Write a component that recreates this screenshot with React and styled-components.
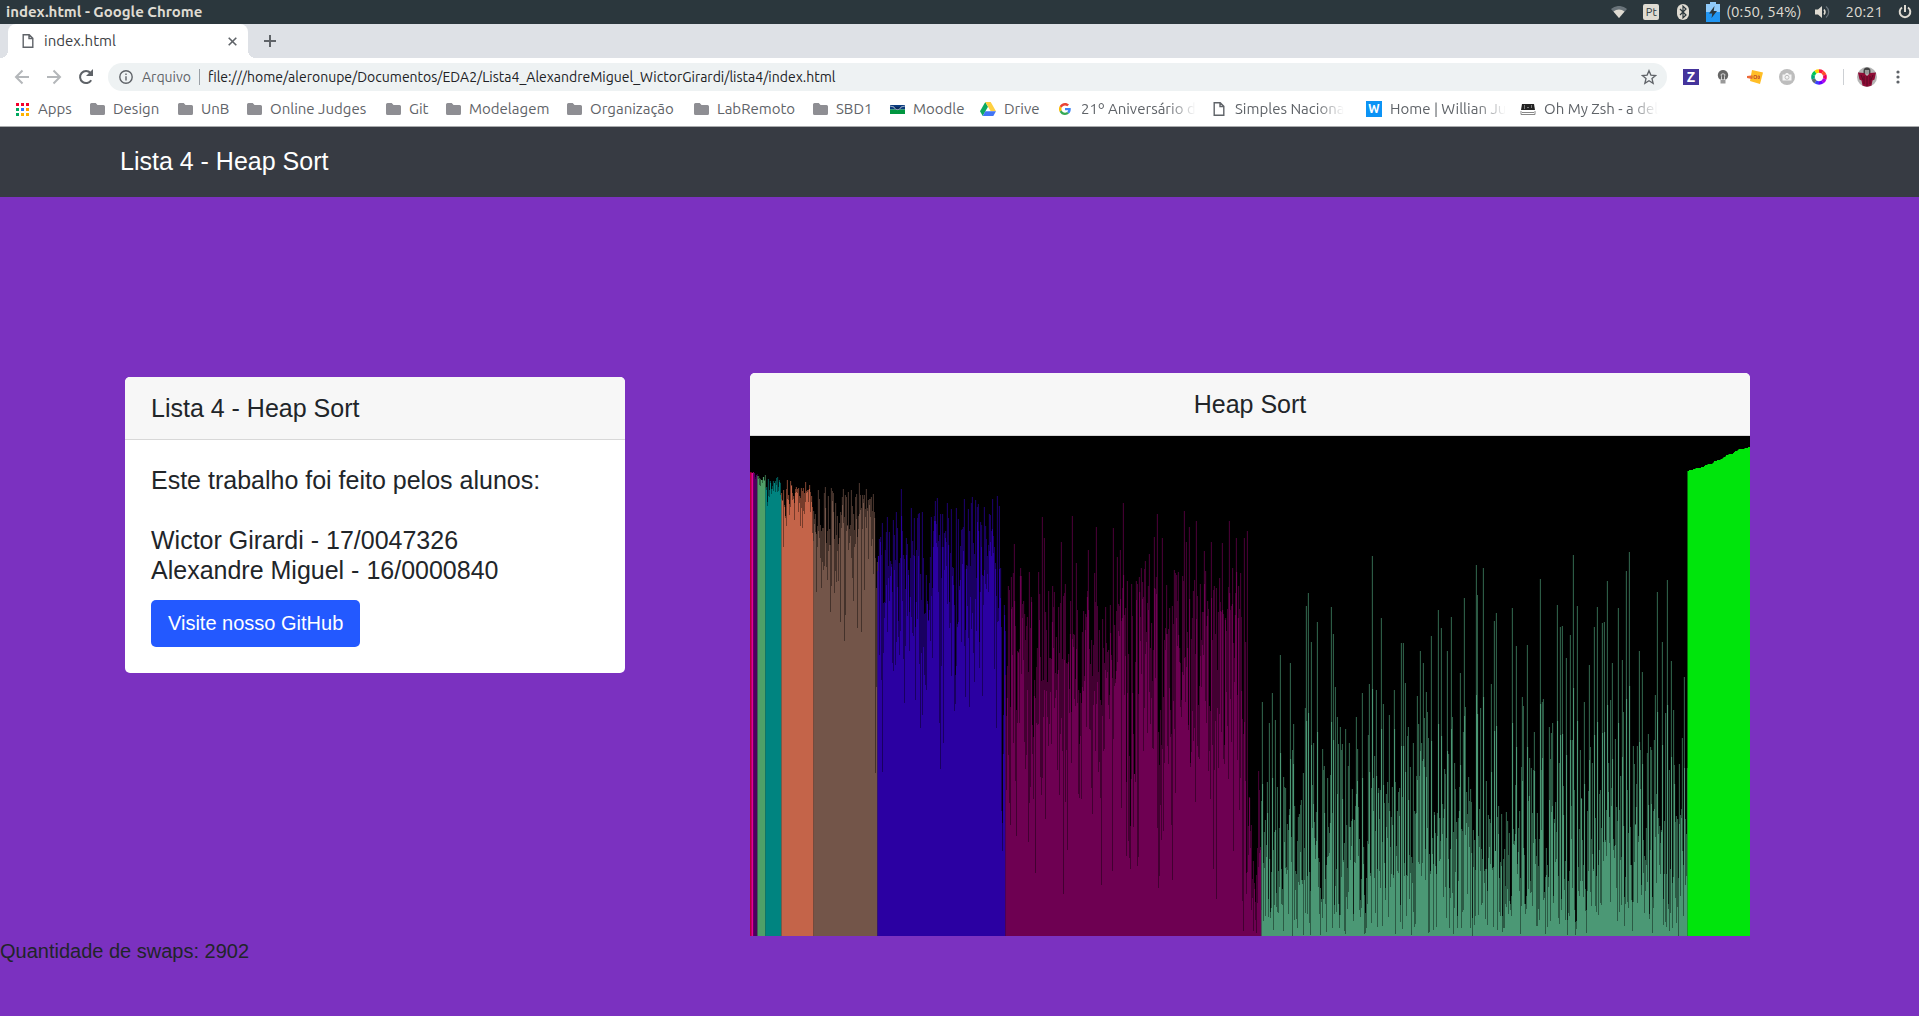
import React, { useMemo } from 'react';
import styled, { createGlobalStyle } from 'styled-components';

const GlobalStyle = createGlobalStyle`
  *, *::before, *::after { box-sizing: border-box; }
  html, body { margin: 0; min-height: 100%; background: #7b31c0; }
  body { font-family: "Liberation Sans", Arial, sans-serif; font-size: 20px; line-height: 30px; color: #212529; }
  button, input { font: inherit; border: 0; padding: 0; background: none; color: inherit; }
  a { text-decoration: none; color: inherit; }
  svg { display: block; flex: none; }
`;

/* ---------- desktop bar ---------- */
const uiFont = '"Ubuntu", "Noto Sans", "Open Sans", sans-serif';

const DesktopBar = styled.div`
  display: flex;
  align-items: center;
  justify-content: space-between;
  height: 24px;
  padding: 0 6px;
  background: #2b373d;
  color: #dfdbd2;
  font: 15px/24px ${uiFont};
`;
const WindowTitle = styled.strong`
  font-weight: 700;
`;
const Indicators = styled.div`
  display: flex;
  align-items: center;
  gap: 14px;
`;
const Indicator = styled.button`
  display: flex;
  align-items: center;
  justify-content: center;
  gap: 6px;
  min-width: ${(p) => (p.$wide ? 18 : 16)}px;
  height: 24px;
  white-space: nowrap;
`;
const Layout = styled.span`
  width: 16px;
  height: 16px;
  border-radius: 2px;
  background: #dfdbd2;
  color: #2b373d;
  font-size: 11px;
  line-height: 16px;
  text-align: center;
`;

/* ---------- browser chrome ---------- */
const Chrome = styled.header`
  background: #fff;
  border-bottom: 1px solid #a9abad;
  color: #5f6368;
  font: 15px/20px ${uiFont};
`;
const TabStrip = styled.div`
  display: flex;
  align-items: center;
  height: 34px;
  padding-left: 8px;
  background: #dee1e6;
`;
const Tab = styled.div`
  position: relative;
  display: flex;
  align-items: center;
  gap: 10px;
  width: 240px;
  height: 34px;
  padding: 0 10px 0 14px;
  border-radius: 8px 8px 0 0;
  background: #fff;
  color: #3c4043;
  &::before, &::after {
    content: "";
    position: absolute;
    bottom: 0;
    width: 8px;
    height: 8px;
  }
  &::before { right: 100%; background: radial-gradient(circle at 0 0, transparent 8px, #fff 8px); }
  &::after { left: 100%; background: radial-gradient(circle at 100% 0, transparent 8px, #fff 8px); }
`;
const TabTitle = styled.span`
  flex: 1;
`;
const IconButton = styled.button`
  display: flex;
  align-items: center;
  justify-content: center;
  width: ${(p) => p.$w || 32}px;
  height: 28px;
  flex: none;
`;
const Toolbar = styled.div`
  display: flex;
  align-items: center;
  height: 38px;
  padding: 0 5px 0 6px;
  font-size: 14px;
`;
const Omnibox = styled.div`
  display: flex;
  flex: 1;
  align-items: center;
  height: 28px;
  margin: 0 8px 0 6px;
  padding: 0 6px 0 11px;
  border-radius: 14px;
  background: #eef2f3;
`;
const Scheme = styled.label`
  margin-left: 9px;
  padding-right: 8px;
  border-right: 1px solid #9aa0a6;
  line-height: 16px;
`;
const Address = styled.input`
  flex: 1;
  min-width: 0;
  margin-left: 8px;
  color: #202124;
  outline: 0;
`;
const Divider = styled.span`
  width: 1px;
  height: 16px;
  margin: 0 8px;
  background: #cdd0d4;
`;
const Bookmarks = styled.nav`
  display: flex;
  align-items: center;
  height: 30px;
  padding: 0 0 4px 14px;
`;
const Bookmark = styled.a`
  display: flex;
  align-items: center;
  gap: 8px;
  flex: none;
  width: ${(p) => p.$w}px;
  height: 26px;
  white-space: nowrap;
`;
const BookmarkIcon = styled.span`
  display: flex;
  justify-content: center;
  width: 16px;
  flex: none;
`;
const BookmarkLabel = styled.span`
  mask-image: ${(p) => (p.$fade ? 'linear-gradient(90deg, #000 75%, transparent)' : 'none')};
`;

/* ---------- page ---------- */
const Navbar = styled.div`
  display: flex;
  align-items: center;
  height: 70px;
  padding: 0 120px 2px;
  background: #373b43;
`;
const Brand = styled.a`
  color: #fff;
  font-size: 25px;
  line-height: 38px;
`;
const Board = styled.main`
  display: flex;
  align-items: flex-start;
  gap: 125px;
  padding: 176px 169px 0 125px;
`;
const Card = styled.section`
  flex: ${(p) => p.$grow} 1 0;
  min-width: 0;
  margin-top: ${(p) => (p.$drop ? 4 : 0)}px;
  overflow: hidden;
  border-radius: ${(p) => (p.$drop ? '5px' : '5px 5px 0 0')};
  background: #fff;
`;
const CardHeader = styled.h5`
  margin: 0;
  padding: 16px 26px;
  border-bottom: 1px solid #d8d8d8;
  background: #f7f7f7;
  font-size: 25px;
  line-height: 30px;
  font-weight: 400;
  text-align: ${(p) => (p.$center ? 'center' : 'left')};
`;
const CardBody = styled.div`
  padding: 25px 26px 26px;
`;
const Authors = styled.h5`
  margin: 0 0 15px;
  font-size: 25px;
  line-height: 30px;
  font-weight: 400;
`;
const GithubLink = styled.a`
  display: block;
  width: fit-content;
  padding: 8px 17px 9px;
  border-radius: 5px;
  background: #2359ff;
  color: #fff;
`;
const Chart = styled.svg`
  width: 100%;
  height: auto;
  background: #000;
`;
const SwapCount = styled.p`
  margin: 0;
`;

/* ---------- heap data ---------- */
const TOTAL = 2000;
const SORTED = 125;
const HEAP = TOTAL - SORTED;
const LEVEL_COLORS = ['#e00038', '#c80048', '#e8009a', '#4c0060', '#4fa068', '#008480', '#c46449', '#735549', '#2b00a2', '#6e0052', '#4b9875'];

// Tallest bars per level as [x, height] on the 1000 x 500 chart.
const PEAKS = [
  [69, 437], [74, 443], [81, 448], [93, 447], [101, 446], [109, 453], [116, 447], [123, 442],
  [128, 380], [132, 413], [136, 404], [143, 416], [146, 424], [152, 405], [156, 398], [161, 428], [164, 418], [169, 423], [172, 424], [181, 419], [187, 438], [192, 389], [198, 418], [201, 427], [206, 428], [218, 427], [222, 439], [228, 432], [234, 429], [239, 422], [247, 440], [249, 430],
  [264, 392], [270, 360], [271, 360], [279, 364], [292, 419], [294, 398], [311, 394], [322, 420], [326, 373], [338, 386], [346, 409], [363, 408], [367, 379], [370, 386], [373, 433], [389, 359], [395, 375], [399, 382], [404, 399], [407, 422], [412, 398], [424, 366], [434, 425], [436, 394], [439, 409], [446, 415], [454, 385], [461, 394], [466, 348], [472, 393], [479, 415], [486, 398], [494, 398], [497, 405],
  [512, 234], [522, 243], [530, 281], [540, 273], [556, 330], [558, 343], [561, 294], [567, 314], [581, 329], [583, 302], [587, 219], [592, 192], [606, 219], [612, 243], [619, 252], [622, 380], [626, 246], [631, 318], [633, 232], [644, 246], [651, 293], [653, 293], [655, 253], [658, 209], [667, 240], [670, 285], [673, 273], [676, 244], [681, 300], [688, 326], [691, 308], [697, 285], [701, 319], [710, 263], [714, 338], [726, 371], [727, 341], [733, 368], [741, 252], [744, 315], [746, 323],
  [762, 328], [766, 290], [772, 239], [777, 291], [784, 204], [790, 357], [792, 234], [799, 209], [807, 331], [810, 309], [812, 310], [816, 278], [820, 301], [823, 381], [827, 330], [834, 234], [839, 271], [844, 309], [847, 329], [852, 313], [854, 314], [857, 355], [862, 273], [868, 328], [872, 276], [876, 365], [879, 384], [889, 285], [892, 264], [898, 202], [904, 196], [907, 344], [912, 294], [917, 356], [921, 275], [929, 172], [934, 259], [937, 168],
];

function randomSource(seed) {
  let s = seed;
  return () => {
    s = (s + 0x6d2b79f5) | 0;
    let t = Math.imul(s ^ (s >>> 15), 1 | s);
    t = (t + Math.imul(t ^ (t >>> 7), 61 | t)) ^ t;
    return ((t ^ (t >>> 14)) >>> 0) / 4294967296;
  };
}

function siftDown(values, start, size) {
  let i = start;
  for (;;) {
    let top = i;
    const l = 2 * i + 1;
    if (l < size && values[l] > values[top]) top = l;
    if (l + 1 < size && values[l + 1] > values[top]) top = l + 1;
    if (top === i) return;
    [values[i], values[top]] = [values[top], values[i]];
    i = top;
  }
}

const levelOf = (i) => Math.floor(Math.log2(i + 1));

// Keeps the order of the values while lifting the largest ones a little.
const lift = (v) => (v > 459 ? v + (490 - v) * 0.16 : v + 5 * (v / 459) ** 4);

function buildHeights() {
  const random = randomSource(47326);
  const values = Array.from({ length: TOTAL }, () => lift(Math.floor(random() * 490)));
  for (let i = TOTAL / 2 - 1; i >= 0; i -= 1) siftDown(values, i, TOTAL);
  for (let end = TOTAL - 1; end >= HEAP; end -= 1) {
    [values[0], values[end]] = [values[end], values[0]];
    siftDown(values, 0, end);
  }
  for (let i = 0; i < HEAP; i += 1) {
    const level = levelOf(i);
    if (level === 10) {
      if (values[i] > 260) values[i] *= 0.4;
      values[i] *= 0.5 + 0.5 * random();
    }
    if (level === 9 && values[i] > 370) values[i] *= 0.85;
    if (level === 9 && i >= 996) values[i] *= 0.5;
  }
  PEAKS.forEach(([x, h]) => {
    values[x * 2] = h;
    if (levelOf(x * 2) === 10) values[x * 2 + 1] = Math.max(values[x * 2 + 1], h * 0.65);
  });
  return values;
}

function barsPath(values, from, to, spread = 0) {
  let d = '';
  for (let i = from; i < to; i += 1) {
    const x = i / 2 - spread;
    d += `M${x} 500V${500 - Math.round(values[i])}h${0.5 + spread * 2}V500z`;
  }
  return d;
}

function HeapChart() {
  const bands = useMemo(() => {
    const values = buildHeights();
    const list = LEVEL_COLORS.map((color, level) => {
      const from = 2 ** level - 1;
      const to = Math.min(2 ** (level + 1) - 1, HEAP);
      return { color, bars: barsPath(values, from, to), halo: barsPath(values, from, to, 0.5) };
    });
    list.push({ color: '#00e50c', bars: barsPath(values, HEAP, TOTAL), halo: '' });
    return list;
  }, []);
  return (
    <Chart viewBox="0 0 1000 500" role="img" aria-label="Heap Sort">
      {bands.map((b, i) => (
        <g key={i} fill={b.color}>
          <path d={b.halo} opacity="0.2" />
          <path d={b.bars} />
        </g>
      ))}
    </Chart>
  );
}

/* ---------- icons ---------- */
const PageIcon = () => (
  <svg width="12" height="16" viewBox="0 0 12 16" fill="none" stroke="#5f6368" strokeWidth="1.4"><path d="M1.2 1.7h6l3.6 3.6v9H1.2zM7 1.7v3.8h3.8" /></svg>
);
const FolderIcon = () => (
  <svg width="15" height="12" viewBox="0 0 15 12" fill="#8e8e93"><path d="M1.5 0h4.2l1.8 2h6A1.5 1.5 0 0 1 15 3.5v7a1.5 1.5 0 0 1-1.5 1.5h-12A1.5 1.5 0 0 1 0 10.5v-9A1.5 1.5 0 0 1 1.5 0z" /></svg>
);
const AppsIcon = () => {
  const colors = ['#f4002c', '#f4002c', '#f4002c', '#00a860', '#2979ff', '#ff9c00', '#00a860', '#ffb300', '#ffb300'];
  return (
    <svg width="13" height="13" viewBox="0 0 13 13">
      {colors.map((c, i) => <rect key={i} x={(i % 3) * 5} y={Math.floor(i / 3) * 5} width="3" height="3" fill={c} />)}
    </svg>
  );
};
const MoodleIcon = () => (
  <svg width="15" height="9" viewBox="0 0 15 9"><path fill="#0a3a7c" d="M0 0h15v4.5H0z" /><path fill="#00963f" d="M0 4.5h15V9H0z" /><path fill="#0a2a5c" d="M4 2h7c-.5 4-6.500 4-7 0z" /><path fill="none" stroke="#fff" d="M0 1l4 1c1 3.500 6 3.500 7 0l4-1" strokeWidth=".6" /></svg>
);
const DriveIcon = () => (
  <svg width="16" height="14" viewBox="0 0 16 14"><path fill="#0da960" d="M5.300 0 0 9.300 2.700 14 8 4.700z" /><path fill="#ffd041" d="M5.300 0h5.400L16 9.300h-5.300z" /><path fill="#4175f5" d="M5.400 9.300H16L13.300 14H2.700z" /></svg>
);
const GoogleIcon = () => (
  <svg width="12" height="12" viewBox="0 0 48 48"><path fill="#EA4335" d="M24 9.500c3.500 0 6.700 1.200 9.200 3.600l6.900-6.900C35.900 2.400 30.500 0 24 0 14.600 0 6.500 5.400 2.600 13.200l8 6.200C12.400 13.700 17.700 9.500 24 9.500z" /><path fill="#4285F4" d="M47 24.600c0-1.600-.2-3.100-.4-4.600H24v9h12.900c-.6 3-2.200 5.500-4.700 7.200l7.700 6C44.400 38 47 31.800 47 24.600z" /><path fill="#FBBC05" d="M10.500 28.600a14.500 14.500 0 0 1 0-9.200l-8-6.200a24 24 0 0 0 0 21.600z" /><path fill="#34A853" d="M24 48c6.500 0 11.900-2.100 15.900-5.800l-7.700-6c-2.200 1.500-4.900 2.300-8.200 2.300-6.300 0-11.600-4.200-13.500-9.900l-8 6.200C6.500 42.600 14.600 48 24 48z" /></svg>
);
const LetterTile = styled.span`
  width: 16px;
  height: 16px;
  background: ${(p) => p.$bg};
  color: #fff;
  font-size: ${(p) => p.$size}px;
  line-height: 16px;
  font-weight: 700;
  text-align: center;
`;
const ZshIcon = () => (
  <svg width="16" height="11" viewBox="0 0 16 11"><path fill="#222" d="M2 0h12l1 6H1z" /><path fill="#fff" d="M4 1h1v4H4zM7 3h2v1H7zM11 1h1v3h-1z" opacity=".4" /><path fill="none" stroke="#888" d="M1 7v3.500h14V7M2 8.500h12" /></svg>
);
const Arrow = ({ back }) => (
  <svg width="16" height="16" viewBox="0 0 16 16" fill="none" stroke="#b4b7ba" strokeWidth="2"><path d={back ? 'M15 8H2M8.500 1.500 2 8l6.500 6.500' : 'M1 8h13M7.500 1.500 14 8l-6.500 6.500'} /></svg>
);
const ReloadIcon = () => (
  <svg width="16" height="16" viewBox="0 0 16 16"><path d="M13.200 11.200A6 6 0 1 1 12.500 4" fill="none" stroke="#5f6368" strokeWidth="2" /><path d="M15 0v7H8z" fill="#5f6368" /></svg>
);
const InfoIcon = () => (
  <svg width="14" height="14" viewBox="0 0 14 14" fill="none" stroke="#5f6368" strokeWidth="1.400"><circle cx="7" cy="7" r="6.200" /><path d="M7 6.200v4.300M7 3.500V5" /></svg>
);
const StarIcon = () => (
  <svg width="16" height="16" viewBox="0 0 24 24" fill="none" stroke="#5f6368" strokeWidth="2"><path d="m12 2.500 2.800 6.600 7.200.6-5.500 4.700 1.700 7L12 17.700l-6.200 3.700 1.700-7L2 9.700l7.200-.6z" /></svg>
);
const BulbIcon = () => (
  <svg width="12" height="16" viewBox="0 0 12 16"><path fill="#666" d="M6 1a5.200 5.200 0 0 1 3 9.400H3A5.200 5.200 0 0 1 6 1z" /><path fill="none" stroke="#ddd" strokeWidth=".9" d="M4.500 11V7.500L4 5.500l2-.8 2 .8-.5 2V11" /><path fill="#999" d="M3.500 11h5v3.500h-5z" /></svg>
);
const NoteIcon = () => (
  <svg width="16" height="14" viewBox="0 0 16 14"><path fill="#ffbe26" d="m5 0 11 2.500L13 14 3 11z" /><path fill="#ee6a3a" d="m0 6 4-.5V4.500l1 4.500-5-1z" /><path fill="none" stroke="#c8592b" d="M5 5.500v3M7 5.500h2.500v3H7zM11 6h1.500v2.500H11z" strokeWidth=".9" /></svg>
);
const CameraIcon = () => (
  <svg width="16" height="16" viewBox="0 0 16 16"><circle cx="8" cy="8" r="8" fill="#bdbdbd" /><path fill="#f4f4f4" d="M3.500 5.500H6L7 4h2l1 1.500h2.500v6h-9z" /><circle cx="8" cy="8.300" r="2" fill="#f4f4f4" stroke="#bdbdbd" /></svg>
);
const WheelIcon = () => {
  const colors = ['#ff1744', '#ff4d2a', '#f0005c', '#b000e8', '#6a00ff', '#3d3dff', '#5b6b73', '#00a878', '#00c853', '#ffd600'];
  return (
    <svg width="16" height="16" viewBox="0 0 16 16" fill="none" strokeWidth="3.600">
      {colors.map((c, i) => {
        const a = (i * 36 - 90) * Math.PI / 180;
        const b = a + 36 * Math.PI / 180;
        return <path key={c} stroke={c} d={`M${8 + 6 * Math.cos(a)} ${8 + 6 * Math.sin(a)}A6 6 0 0 1 ${8 + 6 * Math.cos(b)} ${8 + 6 * Math.sin(b)}`} />;
      })}
    </svg>
  );
};
const AvatarIcon = () => (
  <svg width="20" height="20" viewBox="0 0 20 20"><circle cx="10" cy="10" r="10" fill="#b5b5b5" /><path fill="#444" d="M6.500 4a3.500 3.500 0 0 1 7 0v3h-7z" /><path fill="#999" d="M8 3h4v4H8z" /><path fill="#8e0b35" d="M1 5.500 7 6l3 3 3-3 6-.5-1.500 7-2 1-1 5a10 10 0 0 1-9 0l-1-5-2-1z" /><path stroke="#4b0a22" d="M10 9v10M7 9v8M13 9v8M4 8l2 5M16 8l-2 5" strokeWidth=".8" /></svg>
);
const WifiIcon = () => (
  <svg width="16" height="12" viewBox="0 0 16 12"><path fill="#69737a" d="M0 3a12 12 0 0 1 16 0l-8 9z" /><path fill="#dfdbd2" d="M2.500 5.500a8.500 8.500 0 0 1 11 0L8 12z" /></svg>
);
const BluetoothIcon = () => (
  <svg width="12" height="16" viewBox="0 0 12 16"><rect width="12" height="16" rx="6" fill="#dfdbd2" /><path fill="none" stroke="#2b373d" strokeWidth="1.200" d="m3 5 6 6-3 2.800V2.200L9 5l-6 6" /></svg>
);
const BatteryIcon = () => (
  <svg width="14" height="20" viewBox="0 0 14 20"><path fill="#90caf9" d="M4 0h6v2h4v8H0V2h4z" /><path fill="#2196f3" d="M0 10h14v10H0z" /><path fill="#2b373d" d="M8.500 4 3 11.500h3.300L5.500 16 11 9H7.700z" /></svg>
);
const VolumeIcon = () => (
  <svg width="16" height="14" viewBox="0 0 16 14"><path fill="#dfdbd2" d="M0 4.500h3L7 1v12L3 9.500H0z" /><path fill="none" stroke="#dfdbd2" strokeWidth="1.500" d="M9 4.500a4 4 0 0 1 0 5" /><path fill="none" stroke="#69737a" strokeWidth="1.300" d="M11 1.500a7 7 0 0 1 0 11" /></svg>
);
const PowerIcon = () => (
  <svg width="14" height="14" viewBox="0 0 14 14" fill="none" stroke="#dfdbd2" strokeWidth="2"><path d="M4 2.500a5.300 5.300 0 1 0 6 0M7 0v7" /></svg>
);

const BOOKMARKS = [
  { label: 'Apps', w: 75, icon: <AppsIcon /> },
  { label: 'Design', w: 88, icon: <FolderIcon /> },
  { label: 'UnB', w: 69, icon: <FolderIcon /> },
  { label: 'Online Judges', w: 139, icon: <FolderIcon /> },
  { label: 'Git', w: 60, icon: <FolderIcon /> },
  { label: 'Modelagem', w: 121, icon: <FolderIcon /> },
  { label: 'Organização', w: 127, icon: <FolderIcon /> },
  { label: 'LabRemoto', w: 119, icon: <FolderIcon /> },
  { label: 'SBD1', w: 77, icon: <FolderIcon /> },
  { label: 'Moodle', w: 91, icon: <MoodleIcon /> },
  { label: 'Drive', w: 77, icon: <DriveIcon /> },
  { label: '21º Aniversário d', w: 154, fade: true, icon: <GoogleIcon /> },
  { label: 'Simples Naciona', w: 155, fade: true, icon: <PageIcon /> },
  { label: 'Home | Willian Ju', w: 154, fade: true, icon: <LetterTile $bg="#0c93f5" $size={12}>W</LetterTile> },
  { label: 'Oh My Zsh - a del', w: 154, fade: true, icon: <ZshIcon /> },
];

export default function App() {
  return (
    <>
      <GlobalStyle />
      <DesktopBar>
        <WindowTitle>index.html - Google Chrome</WindowTitle>
        <Indicators>
          <Indicator $wide aria-label="Wi-Fi"><WifiIcon /></Indicator>
          <Indicator $wide><Layout>Pt</Layout></Indicator>
          <Indicator $wide aria-label="Bluetooth"><BluetoothIcon /></Indicator>
          <Indicator><BatteryIcon />(0:50, 54%)</Indicator>
          <Indicator aria-label="Volume"><VolumeIcon /></Indicator>
          <Indicator>20:21</Indicator>
          <Indicator aria-label="Power"><PowerIcon /></Indicator>
        </Indicators>
      </DesktopBar>

      <Chrome>
        <TabStrip>
          <Tab>
            <PageIcon />
            <TabTitle>index.html</TabTitle>
            <IconButton $w={12} aria-label="Close tab">
              <svg width="9" height="9" viewBox="0 0 9 9" stroke="#5f6368" strokeWidth="1.600"><path d="m.7.7 7.600 7.600M8.300.7.7 8.300" /></svg>
            </IconButton>
          </Tab>
          <IconButton $w={44} aria-label="New tab">
            <svg width="12" height="12" viewBox="0 0 12 12" stroke="#5f6368" strokeWidth="2"><path d="M6 0v12M0 6h12" /></svg>
          </IconButton>
        </TabStrip>
        <Toolbar>
          <IconButton aria-label="Back"><Arrow back /></IconButton>
          <IconButton aria-label="Forward"><Arrow /></IconButton>
          <IconButton aria-label="Reload"><ReloadIcon /></IconButton>
          <Omnibox>
            <InfoIcon />
            <Scheme htmlFor="address">Arquivo</Scheme>
            <Address id="address" defaultValue="file:///home/aleronupe/Documentos/EDA2/Lista4_AlexandreMiguel_WictorGirardi/lista4/index.html" />
            <IconButton $w={24} aria-label="Bookmark this page"><StarIcon /></IconButton>
          </Omnibox>
          <IconButton aria-label="Z extension"><LetterTile $bg="#45349c" $size={14}>Z</LetterTile></IconButton>
          <IconButton aria-label="Lamp extension"><BulbIcon /></IconButton>
          <IconButton aria-label="Notes extension"><NoteIcon /></IconButton>
          <IconButton aria-label="Camera extension"><CameraIcon /></IconButton>
          <IconButton aria-label="Colour extension"><WheelIcon /></IconButton>
          <Divider />
          <IconButton $w={30} aria-label="Profile"><AvatarIcon /></IconButton>
          <IconButton aria-label="Menu">
            <svg width="4" height="14" viewBox="0 0 4 14" fill="#5f6368"><circle cx="2" cy="2" r="1.600" /><circle cx="2" cy="7" r="1.600" /><circle cx="2" cy="12" r="1.600" /></svg>
          </IconButton>
        </Toolbar>
        <Bookmarks>
          {BOOKMARKS.map((b) => (
            <Bookmark key={b.label} href="#" $w={b.w}>
              <BookmarkIcon>{b.icon}</BookmarkIcon>
              <BookmarkLabel $fade={b.fade}>{b.label}</BookmarkLabel>
            </Bookmark>
          ))}
        </Bookmarks>
      </Chrome>

      <Navbar><Brand href="#">Lista 4 - Heap Sort</Brand></Navbar>
      <Board>
        <Card $grow={1} $drop>
          <CardHeader>Lista 4 - Heap Sort</CardHeader>
          <CardBody>
            <Authors>
              Este trabalho foi feito pelos alunos:<br /><br />
              Wictor Girardi - 17/0047326<br />
              Alexandre Miguel - 16/0000840
            </Authors>
            <GithubLink href="#">Visite nosso GitHub</GithubLink>
          </CardBody>
        </Card>
        <Card $grow={2}>
          <CardHeader $center>Heap Sort</CardHeader>
          <HeapChart />
        </Card>
      </Board>
      <SwapCount>Quantidade de swaps: 2902</SwapCount>
    </>
  );
}
